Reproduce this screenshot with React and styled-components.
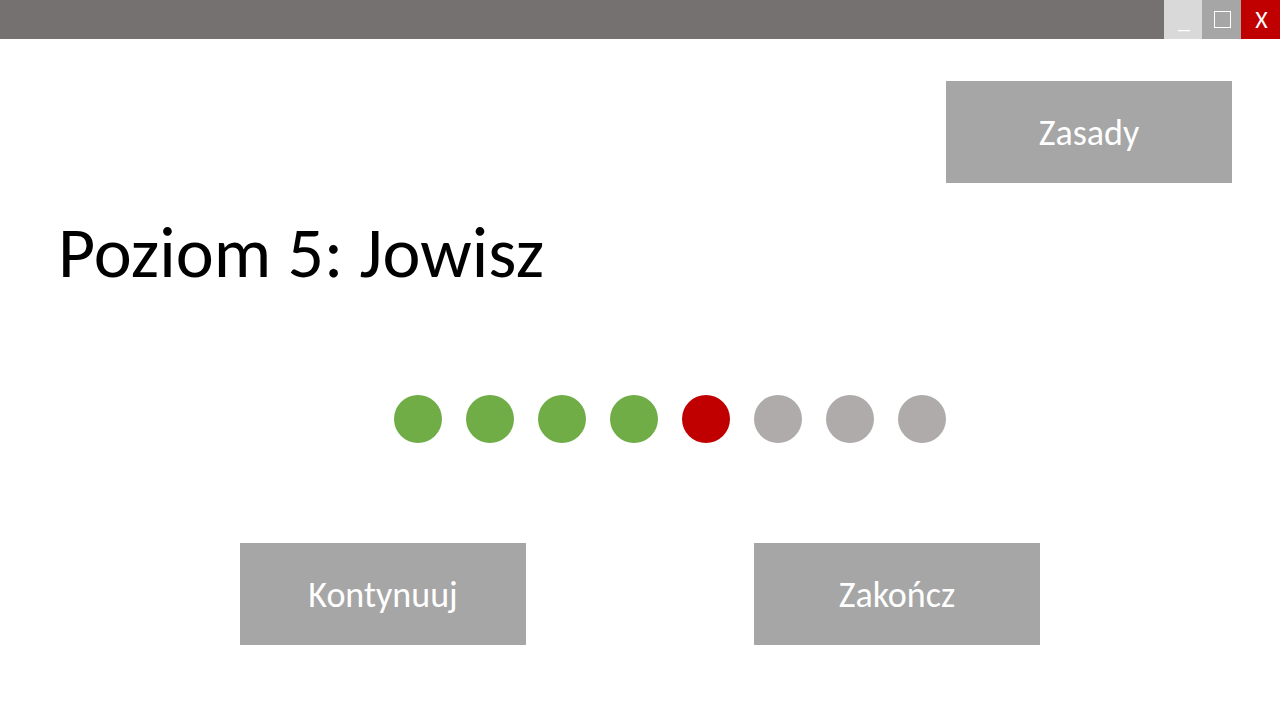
import React from "react";
import styled, { createGlobalStyle } from "styled-components";

const GlobalStyle = createGlobalStyle`
  *, *::before, *::after { box-sizing: border-box; }
  body {
    margin: 0;
    background: #ffffff;
    color: #000000;
    font-family: Carlito, Calibri, Lato, "Open Sans", sans-serif;
  }
`;

const Window = styled.div`
  display: flex;
  flex-direction: column;
  min-height: 100vh;
`;

const TitleBar = styled.header`
  display: flex;
  justify-content: flex-end;
  height: 39px;
  background: #767171;
`;

const WindowButton = styled.button`
  display: flex;
  align-items: center;
  justify-content: center;
  width: ${({ $width = 39 }) => $width}px;
  height: 39px;
  padding: 0 0 0 2px;
  border: 0;
  background: ${({ $color }) => $color};
  color: #ffffff;
  font: inherit;
  font-size: 24px;
  line-height: 28px;
`;

const Content = styled.main`
  display: flex;
  flex-direction: column;
  padding: 42px 48px 0 58px;
`;

const TopActions = styled.div`
  display: flex;
  justify-content: flex-end;
`;

const Button = styled.button`
  width: 286px;
  height: 102px;
  padding: 2px 0 0;
  border: 0;
  background: #a6a6a6;
  color: #ffffff;
  font: inherit;
  font-size: 36px;
  line-height: 44px;
`;

const Title = styled.h1`
  margin: 29px 0 0;
  font-size: 72px;
  line-height: 80px;
  font-weight: 400;
`;

const Levels = styled.ol`
  display: flex;
  justify-content: center;
  gap: 24px;
  margin: 103px 0 0 50px;
  padding: 0;
  list-style: none;
`;

const colors = { done: "#70ad47", current: "#c00000", locked: "#afabab" };

const Level = styled.li`
  width: 48px;
  height: 48px;
  border-radius: 50%;
  background: ${({ $state }) => colors[$state]};
`;

const BottomActions = styled.div`
  display: flex;
  justify-content: center;
  gap: 228px;
  margin: 100px 10px 0 0;
`;

const levels = ["done", "done", "done", "done", "current", "locked", "locked", "locked"];

export default function App() {
  return (
    <Window>
      <GlobalStyle />
      <TitleBar>
        <WindowButton type="button" $color="#d9d9d9" $width={38}>_</WindowButton>
        <WindowButton type="button" $color="#a6a6a6" aria-label="Maksymalizuj">
          <svg width="17" height="17" viewBox="0 0 17 17" fill="none" stroke="#fff">
            <rect x="0.5" y="0.5" width="16" height="16" />
          </svg>
        </WindowButton>
        <WindowButton type="button" $color="#c00000">X</WindowButton>
      </TitleBar>
      <Content>
        <TopActions>
          <Button type="button">Zasady</Button>
        </TopActions>
        <Title>Poziom 5: Jowisz</Title>
        <Levels>
          {levels.map((state, i) => <Level key={i} $state={state} />)}
        </Levels>
        <BottomActions>
          <Button type="button">Kontynuuj</Button>
          <Button type="button">Zakończ</Button>
        </BottomActions>
      </Content>
    </Window>
  );
}
